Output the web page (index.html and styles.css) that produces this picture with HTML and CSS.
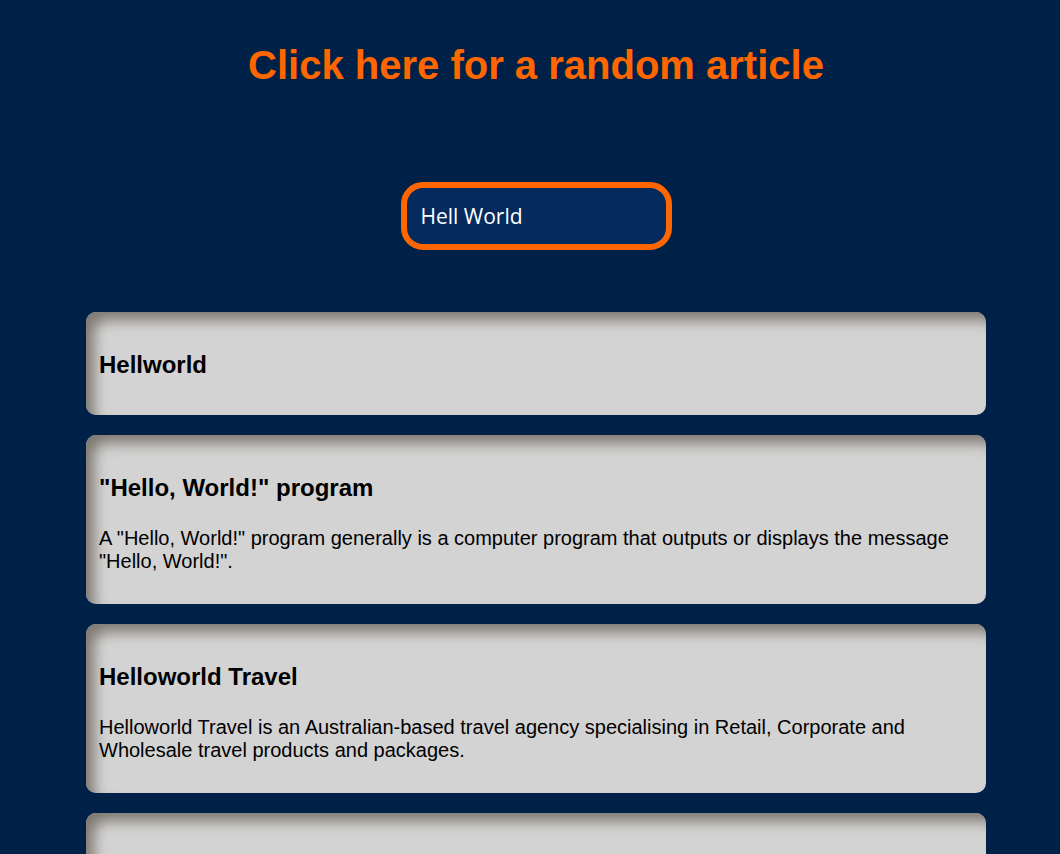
FILE: index.html
```html
<!DOCTYPE html>
<html lang="en">
<head>
<meta charset="utf-8">
<title>Wikipedia Viewer</title>
<link rel="stylesheet" href="styles.css">
</head>
<body>
<div class="page">
  <h1 class="title"><a href="#" class="random-link">Click here for a random article</a></h1>
  <div class="search">
    <input class="search-input" type="text" value="Hell World" autofocus>
  </div>
  <div class="results">
    <a class="card" href="#">
      <h2 class="card-title">Hellworld</h2>
    </a>
    <a class="card" href="#">
      <h2 class="card-title">"Hello, World!" program</h2>
      <p class="card-text">A "Hello, World!" program generally is a computer program that outputs or displays the message "Hello, World!".</p>
    </a>
    <a class="card" href="#">
      <h2 class="card-title">Helloworld Travel</h2>
      <p class="card-text">Helloworld Travel is an Australian-based travel agency specialising in Retail, Corporate and Wholesale travel products and packages.</p>
    </a>
    <a class="card" href="#">
      <h2 class="card-title">Hello World (film)</h2>
      <p class="card-text">Hello World is a film.</p>
    </a>
  </div>
</div>
</body>
</html>
```
FILE: styles.css
```css
html, body {
  margin: 0;
  padding: 0;
  background: #002147;
}
body {
  font-family: "Liberation Sans", Arial, sans-serif;
  color: #000;
}
.page {
  display: flex;
  flex-direction: column;
  align-items: center;
  padding-top: 42px;
  padding-left: 12px;
}
.title {
  margin: 0;
  font-size: 40px;
  line-height: 46px;
  font-weight: bold;
  text-align: center;
}
.random-link {
  color: #ff6600;
  text-decoration: none;
}
.search {
  margin-top: 94px;
}
.search-input {
  box-sizing: border-box;
  width: 271px;
  height: 68px;
  border: 6px solid #ff6600;
  border-radius: 22px;
  background: #042a5e;
  color: #ffffff;
  font-family: "Open Sans", "Noto Sans", sans-serif;
  font-size: 21px;
  padding: 0 14px;
  outline: none;
  caret-color: #ffffff;
}
.results {
  margin-top: 62px;
  width: 900px;
  display: flex;
  flex-direction: column;
  gap: 20px;
}
.card {
  display: block;
  background: #d3d3d3;
  border-radius: 10px;
  padding: 19px 13px 11px;
  box-shadow: inset 10px 10px 14px -2px #7d7870;
  color: #000;
  text-decoration: none;
}
.card-title {
  margin: 20px 0 25px;
  font-size: 24px;
  line-height: 28px;
  font-weight: bold;
}
.card-text {
  margin: 0 0 20px;
  font-size: 20px;
  line-height: 23px;
}
```
